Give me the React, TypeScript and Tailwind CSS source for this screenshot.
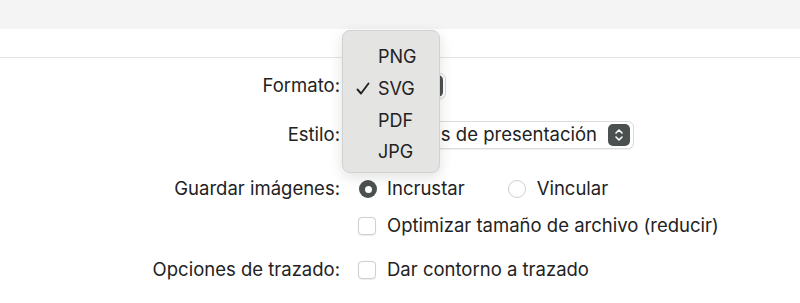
import React from "react";

function Stepper({ className = "" }: { className?: string }) {
  return (
    <div className={`flex items-center justify-center rounded-[5px] bg-[#4b5051] ${className}`}>
      <svg width="12" height="16" viewBox="0 0 12 16" fill="none">
        <path d="M3 6 L6 3 L9 6" stroke="white" strokeWidth="1.6" strokeLinecap="round" strokeLinejoin="round" />
        <path d="M3 10 L6 13 L9 10" stroke="white" strokeWidth="1.6" strokeLinecap="round" strokeLinejoin="round" />
      </svg>
    </div>
  );
}

function Checkbox() {
  return <div className="h-[18px] w-[18px] shrink-0 rounded-[4px] border border-[#cfcfcf] bg-white shadow-[0_0.5px_1px_rgba(0,0,0,0.08)]" />;
}

export default function App() {
  const font = { fontFamily: "Inter, 'Noto Sans', sans-serif" };
  return (
    <div className="relative h-[303px] w-[800px] overflow-hidden bg-white text-[18.5px] text-[#222222]" style={font}>
      <div className="h-[29px] bg-[#f4f4f4]" />
      <div className="h-[29px] border-b border-[#e3e3e3] bg-white" />

      <div className="grid grid-cols-[340px_1fr] gap-x-[10px]">
        {/* Formato */}
        <div className="mt-[15px] flex h-[26px] items-center justify-end">Formato:</div>
        <div className="mt-[15px] flex h-[26px] items-center">
          <div className="flex h-[26px] w-[96px] items-center justify-end rounded-[6px] border border-[#dcdcdc] bg-white pr-[2px] shadow-[0_1px_1px_rgba(0,0,0,0.06)]">
            <Stepper className="h-[22px] w-[22px]" />
          </div>
        </div>

        {/* Estilo */}
        <div className="mt-[23px] flex h-[26px] items-center justify-end">Estilo:</div>
        <div className="mt-[23px] flex h-[26px] items-center">
          <div className="flex h-[28px] w-[284px] items-center justify-end gap-[11px] rounded-[6px] border border-[#dcdcdc] bg-white pr-[3px] shadow-[0_1px_1px_rgba(0,0,0,0.06)]">
            <div className="flex w-[160px] justify-end overflow-hidden">
              <span className="whitespace-nowrap">s de presentación</span>
            </div>
            <Stepper className="h-[22px] w-[22px]" />
          </div>
        </div>

        {/* Guardar imágenes */}
        <div className="mt-[30px] flex h-[22px] items-center justify-end">Guardar imágenes:</div>
        <div className="mt-[30px] flex h-[22px] items-center">
          <div className="ml-[9px] flex h-[18px] w-[18px] items-center justify-center rounded-full bg-[#4b5051]">
            <div className="h-[7px] w-[7px] rounded-full bg-white" />
          </div>
          <span className="ml-[10px]">Incrustar</span>
          <div className="ml-[43px] h-[18px] w-[18px] rounded-full border border-[#cfcfcf] bg-white" />
          <span className="ml-[11px]">Vincular</span>
        </div>

        {/* Optimizar */}
        <div className="mt-[15px] h-[22px]" />
        <div className="mt-[15px] flex h-[22px] items-center">
          <div className="ml-[8px]"><Checkbox /></div>
          <span className="ml-[11px]">Optimizar tamaño de archivo (reducir)</span>
        </div>

        {/* Opciones de trazado */}
        <div className="mt-[22px] flex h-[22px] items-center justify-end">Opciones de trazado:</div>
        <div className="mt-[22px] flex h-[22px] items-center">
          <div className="ml-[8px]"><Checkbox /></div>
          <span className="ml-[11px]">Dar contorno a trazado</span>
        </div>
      </div>

      {/* Popup menu overlay */}
      <div className="absolute left-[342px] top-[30px] flex h-[143px] w-[98px] flex-col rounded-[8px] border border-[#d2d2d2] bg-[#e4e4e3] pt-[10px] text-[18px] shadow-[0_4px_14px_rgba(0,0,0,0.12)]">
        {["PNG", "SVG", "PDF", "JPG"].map((t) => (
          <div key={t} className="relative flex h-[31.7px] items-center pl-[35px]">
            {t === "SVG" && (
              <svg className="absolute left-[13px]" width="14" height="14" viewBox="0 0 14 14" fill="none">
                <path d="M1.5 7.5 L5 11.5 L12.5 1.5" stroke="#222222" strokeWidth="1.9" strokeLinecap="round" strokeLinejoin="round" />
              </svg>
            )}
            <span>{t}</span>
          </div>
        ))}
      </div>
    </div>
  );
}
